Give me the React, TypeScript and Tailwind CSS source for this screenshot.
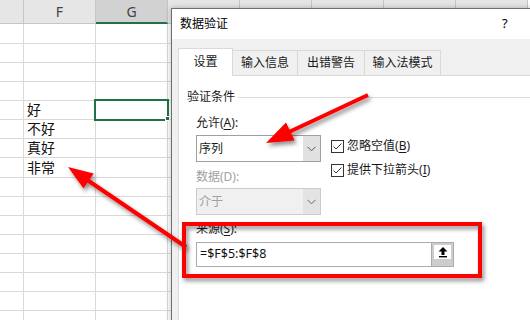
import React from "react";

const rowHeights = [20, 19, 19, 19, 19, 19, 19, 20, 19, 19, 19, 19, 19, 19, 19, 19];
const colWidths = [24, 72, 72, 72, 72, 72, 72, 72];
const colNames = ["", "F", "G", "", "", "", "", ""];
const data: Record<number, string> = { 4: "好", 5: "不好", 6: "真好", 7: "非常" };

function Chevron({ color = "#555" }: { color?: string }) {
  return (
    <svg width="9" height="6" viewBox="0 0 9 6">
      <polyline points="0.5,0.8 4.5,4.8 8.5,0.8" fill="none" stroke={color} strokeWidth="1" />
    </svg>
  );
}

function Checkbox({ label, u }: { label: string; u: string }) {
  return (
    <div className="flex h-[14px] items-center">
      <div className="flex h-[13px] w-[13px] items-center justify-center border border-[#333333] bg-white">
        <svg width="11" height="11" viewBox="0 0 11 11">
          <polyline points="1.5,5.5 4,8 9.5,2.5" fill="none" stroke="#333" strokeWidth="1" />
        </svg>
      </div>
      <span className="ml-[3px] text-[12px] leading-[14px] text-[#1a1a1a]">
        {label}(<span className="underline underline-offset-2">{u}</span>)
      </span>
    </div>
  );
}

export default function App() {
  return (
    <div className="relative h-[320px] w-[530px] overflow-hidden bg-white font-['Noto_Sans','Noto_Sans_CJK_SC',sans-serif]">
      {/* Spreadsheet */}
      <div className="flex flex-col">
        <div className="flex h-[24px]">
          {colWidths.map((w, i) => (
            <div
              key={i}
              style={{ width: w }}
              className={
                "box-border flex h-[24px] shrink-0 items-center justify-center border-r border-[#c6c6c6] text-[14px] text-[#444] " +
                (i === 2
                  ? "border-b-2 border-b-[#217346] bg-[#d2d2d2]"
                  : "border-b border-b-[#c6c6c6] bg-[#e6e6e6]")
              }
            >
              {colNames[i]}
            </div>
          ))}
        </div>
        {rowHeights.map((h, r) => (
          <div key={r} className="flex" style={{ height: h }}>
            {colWidths.map((w, i) => (
              <div
                key={i}
                style={{ width: w }}
                className="box-border flex shrink-0 items-center border-b border-r border-[#d9d9d9] pl-[3px] text-[14px] leading-[16px] text-[#111]"
              >
                {i === 1 ? data[r] ?? "" : ""}
              </div>
            ))}
          </div>
        ))}
      </div>

      {/* Selected cell */}
      <div className="absolute left-[94px] top-[99px] h-[22px] w-[75px] border-2 border-[#217346]" />
      <div className="absolute left-[165px] top-[116px] h-[5px] w-[5px] border border-white bg-[#217346]" />

      {/* Dialog */}
      <div className="absolute left-[171px] top-[8px] flex h-[340px] w-[390px] flex-col border border-[#6f6f6f] bg-[#f0f0f0] shadow-[0_0_6px_rgba(0,0,0,0.25)]">
        <div className="flex h-[30px] shrink-0 items-center bg-white pl-[8px] text-[12px] text-black">
          <span className="w-[322px]">数据验证</span>
          <span className="text-[13px]">?</span>
        </div>
        <div className="flex flex-1 flex-col pl-[6px] pt-[9px]">
          {/* Tabs */}
          <div className="flex h-[27px] items-end text-[12px] text-[#1a1a1a]">
            <div className="relative z-10 -mb-px flex h-[28px] w-[55px] items-center justify-center border border-b-0 border-[#d9d9d9] bg-white pb-[1px]">
              设置
            </div>
            <div className="flex h-[25px] w-[65px] items-center justify-center border border-b-0 border-l-0 border-[#d9d9d9] bg-[#f0f0f0]">
              输入信息
            </div>
            <div className="flex h-[25px] w-[67px] items-center justify-center border border-b-0 border-l-0 border-[#d9d9d9] bg-[#f0f0f0]">
              出错警告
            </div>
            <div className="flex h-[25px] w-[76px] items-center justify-center border border-b-0 border-l-0 border-[#d9d9d9] bg-[#f0f0f0]">
              输入法模式
            </div>
          </div>

          {/* Panel */}
          <div className="flex flex-1 flex-col border border-[#d9d9d9] bg-white pl-[8px] text-[12px] text-[#1a1a1a]">
            <div className="mt-[13px] flex h-[16px] items-center">
              <span className="leading-[16px]">验证条件</span>
              <div className="ml-[3px] h-px flex-1 bg-[#dcdcdc]" />
            </div>
            <div className="flex flex-col pl-[9px]">
              <div className="flex">
                <div className="flex w-[125px] flex-col">
                  <div className="mt-[10px] h-[16px] leading-[16px]">
                    允许(<span className="underline underline-offset-2">A</span>):
                  </div>
                  <div className="mt-[4px] flex h-[27px] border border-[#a0a0a0] bg-white">
                    <div className="flex flex-1 items-center pl-[2px]">序列</div>
                    <div className="flex w-[17px] items-center justify-center bg-[#e1e1e1]">
                      <Chevron />
                    </div>
                  </div>
                  <div className="mt-[7px] h-[16px] leading-[16px] text-[#a0a0a0]">数据(D):</div>
                  <div className="mt-[3px] flex h-[27px] border border-[#cccccc] bg-[#f0f0f0] text-[#a0a0a0]">
                    <div className="flex flex-1 items-center pl-[2px]">介于</div>
                    <div className="flex w-[17px] items-center justify-center bg-[#e3e3e3]">
                      <Chevron color="#666" />
                    </div>
                  </div>
                </div>
                <div className="ml-[10px] flex flex-col gap-[10px] pt-[34px]">
                  <Checkbox label="忽略空值" u="B" />
                  <Checkbox label="提供下拉箭头" u="I" />
                </div>
              </div>
              <div className="mt-[6px] h-[16px] leading-[16px]">
                来源(<span className="underline underline-offset-2">S</span>):
              </div>
              <div className="mt-[5px] flex h-[25px] w-[258px]">
                <div className="flex flex-1 items-center border border-[#ababab] bg-white pl-[3px] text-[12.5px] text-[#111]">
                  =$F$5:$F$8
                </div>
                <div className="flex w-[22px] flex-col border border-l-0 border-[#ababab] bg-[#cdcdcd] px-[2px] pb-[7px] pt-[2px]">
                  <div className="flex flex-1 items-center justify-center bg-white">
                    <svg width="10" height="11" viewBox="0 0 10 11">
                      <polygon points="5,0 9.5,4.5 6.5,4.5 6.5,8 3.5,8 3.5,4.5 0.5,4.5" fill="#000" />
                      <rect x="1" y="9" width="8" height="1.4" fill="#000" />
                    </svg>
                  </div>
                </div>
              </div>
            </div>
          </div>
        </div>
      </div>

      {/* Annotations */}
      <svg className="pointer-events-none absolute left-0 top-0" width="530" height="320">
        <defs>
          <filter id="sh" x="-30%" y="-30%" width="160%" height="160%">
            <feDropShadow dx="2" dy="3" stdDeviation="2" floodColor="#000" floodOpacity="0.45" />
          </filter>
        </defs>
        <g filter="url(#sh)">
          <line x1="186" y1="247" x2="88" y2="180.5" stroke="#ff0000" strokeWidth="4" />
          <polygon points="68,167 83.5,188.4 93.7,173.6" fill="#ff0000" />
        </g>
        <g filter="url(#sh)">
          <rect x="184" y="224" width="296" height="52" fill="none" stroke="#ff0000" strokeWidth="4" />
        </g>
        <g filter="url(#sh)">
          <line x1="368" y1="95" x2="289" y2="132" stroke="#ff0000" strokeWidth="4" />
          <polygon points="266,143 286,122.5 294.7,140.6" fill="#ff0000" />
        </g>
      </svg>
    </div>
  );
}
